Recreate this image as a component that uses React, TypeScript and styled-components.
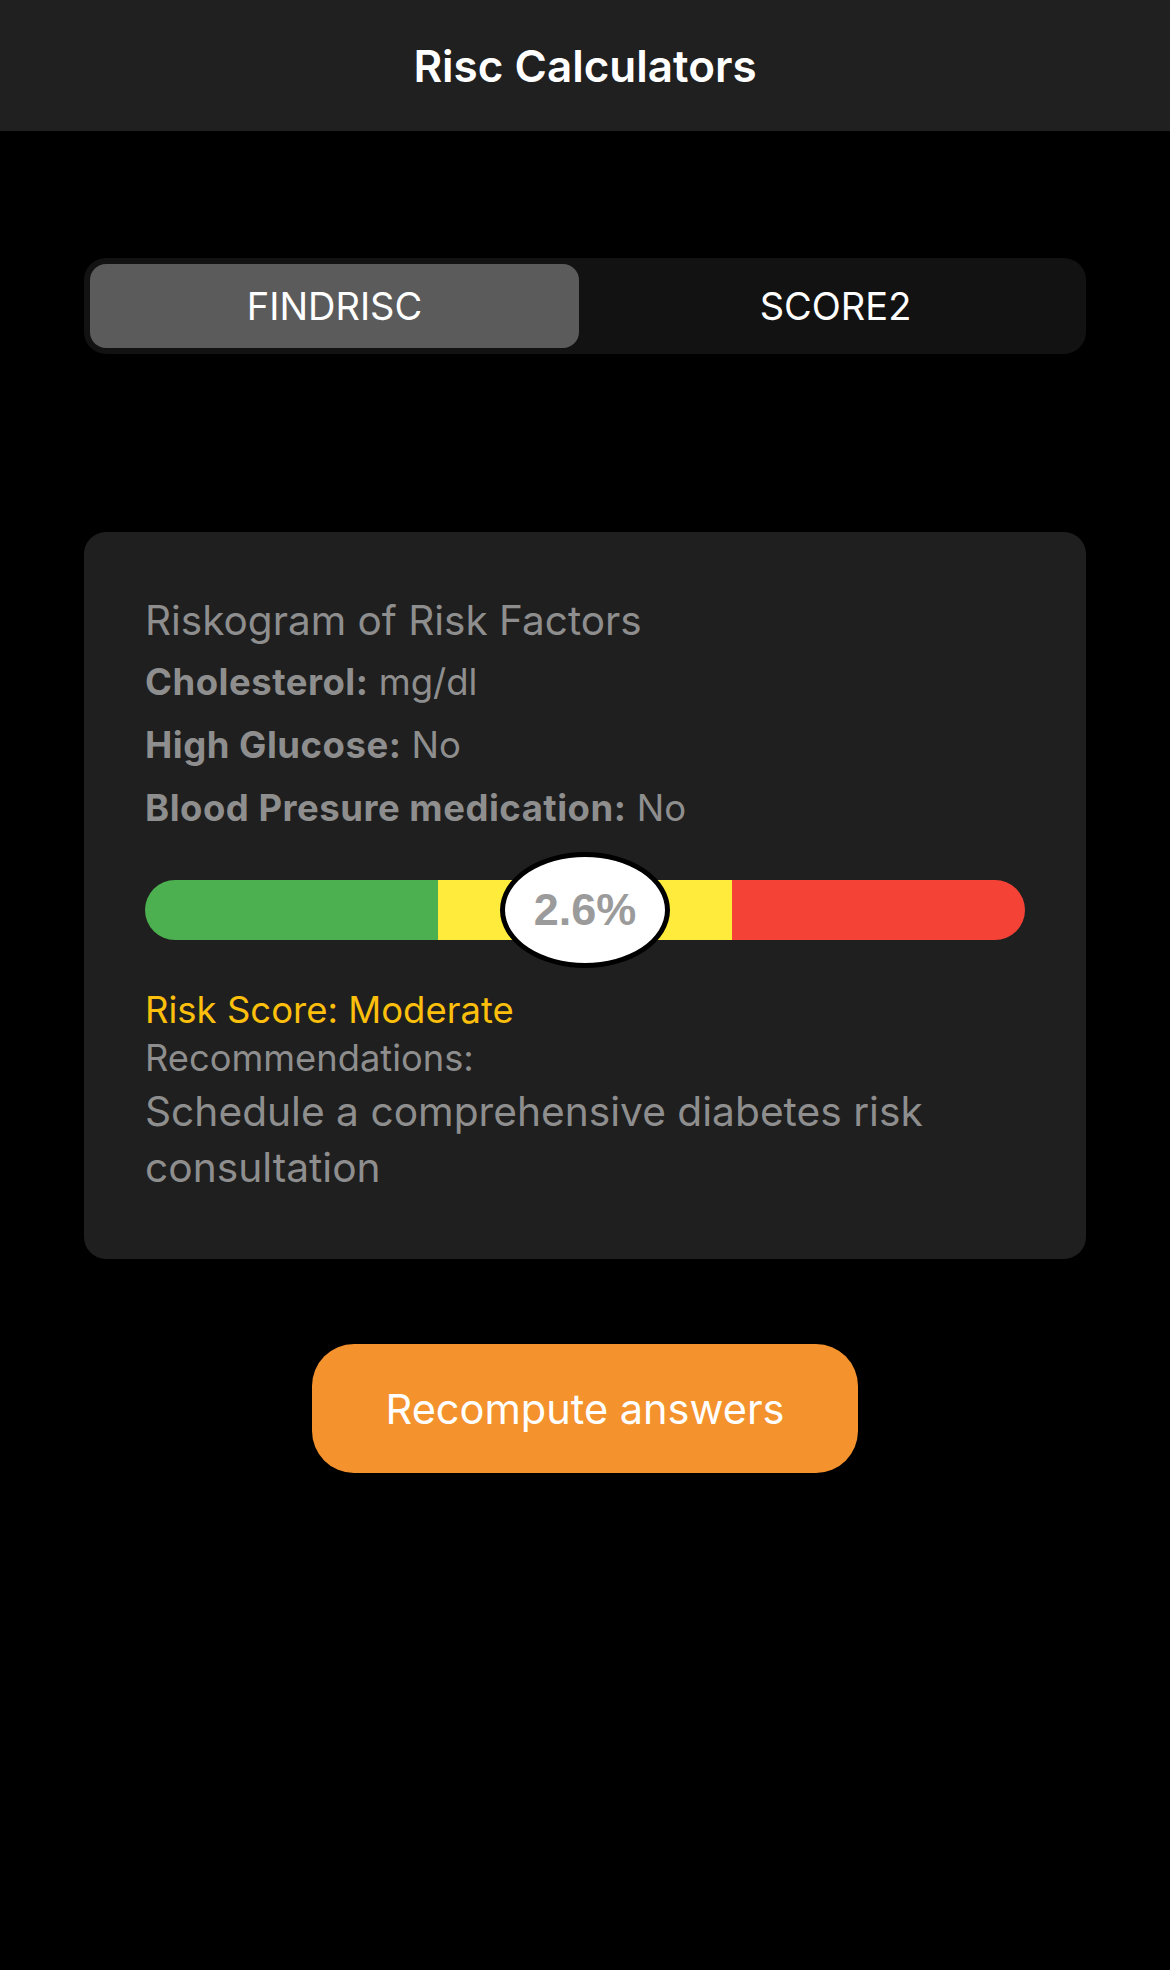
import styled, { createGlobalStyle } from 'styled-components';

const GlobalStyle = createGlobalStyle`
  html, body {
    margin: 0;
    padding: 0;
    background: #000000;
  }
  body {
    font-family: Inter, "Noto Sans", sans-serif;
    -webkit-font-smoothing: antialiased;
  }
  * {
    box-sizing: border-box;
  }
`;

const Page = styled.div`
  min-height: 1970px;
  background: #000000;
`;

const Header = styled.header`
  height: 131px;
  background: #202020;
  display: flex;
  align-items: center;
  justify-content: center;
`;

const Title = styled.h1`
  margin: 0;
  color: #ffffff;
  font-size: 44px;
  font-weight: 600;
  line-height: 50px;
`;

const Content = styled.main`
  padding: 127px 84px 0;
  display: flex;
  flex-direction: column;
  align-items: center;
`;

const Segmented = styled.div`
  width: 100%;
  height: 96px;
  padding: 6px;
  background: #121212;
  border-radius: 22px;
  display: grid;
  grid-template-columns: 1fr 1fr;
  column-gap: 12px;
`;

const SegmentButton = styled.button<{ $active?: boolean }>`
  border: none;
  border-radius: 16px;
  background: ${(p) => (p.$active ? '#5b5b5b' : 'transparent')};
  color: #ffffff;
  font-family: inherit;
  font-size: 38px;
  font-weight: 400;
  display: flex;
  align-items: center;
  justify-content: center;
  cursor: pointer;
`;

const Card = styled.section`
  width: 100%;
  margin-top: 178px;
  padding: 64px 61px 63px;
  background: #1f1f1f;
  border-radius: 22px;
  display: flex;
  flex-direction: column;
`;

const CardTitle = styled.h2`
  margin: 0 0 5px;
  color: #8e8e8e;
  font-size: 40.5px;
  font-weight: 400;
  line-height: 50px;
`;

const FactorRow = styled.div`
  color: #8e8e8e;
  font-size: 36.5px;
  line-height: 63px;

  b {
    font-weight: 700;
    letter-spacing: 0.5px;
  }
`;

const Meter = styled.div`
  position: relative;
  height: 116px;
  margin-top: 12px;
  display: flex;
  align-items: center;
`;

const Bar = styled.div`
  width: 100%;
  height: 60px;
  border-radius: 30px;
  overflow: hidden;
  display: grid;
  grid-template-columns: 1fr 1fr 1fr;
`;

const Zone = styled.div<{ $color: string }>`
  background: ${(p) => p.$color};
`;

const Bubble = styled.div`
  position: absolute;
  top: 0;
  left: 50%;
  width: 170px;
  height: 116px;
  margin-left: -85px;
  border: 5px solid #000000;
  border-radius: 50%;
  background: #ffffff;
  display: flex;
  align-items: center;
  justify-content: center;
  color: #9b9b9b;
  font-family: "Liberation Sans", Arial, sans-serif;
  font-weight: 700;
  font-size: 45px;
`;

const RiskScore = styled.div`
  margin-top: 18px;
  color: #fbbf0c;
  font-size: 36.5px;
  line-height: 48px;
`;

const Label = styled.div`
  color: #8e8e8e;
  font-size: 36.3px;
  line-height: 48px;
`;

const Recommendation = styled.p`
  margin: 2px 0 0;
  color: #8e8e8e;
  font-size: 40.7px;
  line-height: 56px;
`;

const ActionButton = styled.button`
  margin-top: 85px;
  width: 546px;
  height: 129px;
  border: none;
  border-radius: 42px;
  background: #f4922d;
  color: #ffffff;
  font-family: inherit;
  font-size: 41.5px;
  font-weight: 400;
  cursor: pointer;
`;

const App = () => {
  return (
    <Page>
      <GlobalStyle />
      <Header>
        <Title>Risc Calculators</Title>
      </Header>
      <Content>
        <Segmented>
          <SegmentButton $active>FINDRISC</SegmentButton>
          <SegmentButton>SCORE2</SegmentButton>
        </Segmented>

        <Card>
          <CardTitle>Riskogram of Risk Factors</CardTitle>
          <FactorRow>
            <b>Cholesterol:</b> mg/dl
          </FactorRow>
          <FactorRow>
            <b>High Glucose:</b> No
          </FactorRow>
          <FactorRow>
            <b>Blood Presure medication:</b> No
          </FactorRow>

          <Meter>
            <Bar>
              <Zone $color="#4caf50" />
              <Zone $color="#ffeb3b" />
              <Zone $color="#f44336" />
            </Bar>
            <Bubble>2.6%</Bubble>
          </Meter>

          <RiskScore>Risk Score: Moderate</RiskScore>
          <Label>Recommendations:</Label>
          <Recommendation>
            Schedule a comprehensive diabetes risk consultation
          </Recommendation>
        </Card>

        <ActionButton>Recompute answers</ActionButton>
      </Content>
    </Page>
  );
};

export default App;
